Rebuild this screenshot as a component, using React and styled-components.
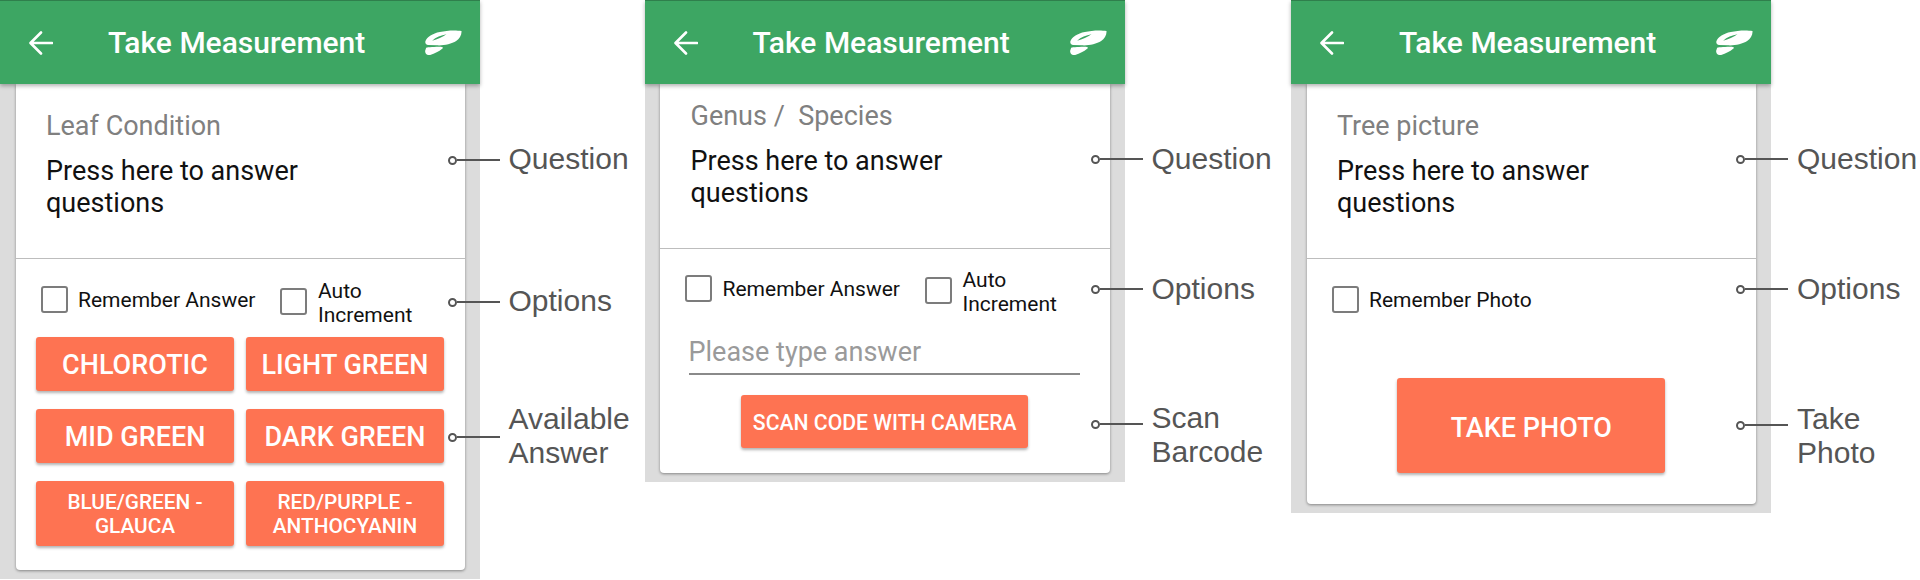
import React from "react";
import styled, { createGlobalStyle } from "styled-components";

const Global = createGlobalStyle`
  html, body { margin: 0; padding: 0; background: #fff; }
  * { box-sizing: border-box; }
  body { font-family: Roboto, "Liberation Sans", sans-serif; }
`;
const Page = styled.div`
  display: grid;
  grid-template-columns: 644.5px 646.5px 629px;
  align-items: start;
  width: 1920px;
`;
const Figure = styled.section`
  position: relative;
  width: 480px;
`;
const Phone = styled.div`
  width: 480px;
  background: #dcdcdc;
  padding-bottom: 8.5px;
`;
const Header = styled.header`
  position: relative;
  z-index: 1;
  height: 84px;
  display: flex;
  align-items: center;
  padding: 0 18px 0 29px;
  background: #3da663;
  border-top: 1px solid #2f7f4c;
  box-shadow: 0 2px 4px rgba(0, 0, 0, 0.3);
  color: #fff;
`;
const Title = styled.h1`
  margin: 0 auto 0 55px;
  font-size: 30px;
  font-weight: 500;
  line-height: 1;
`;
const Card = styled.main`
  margin: 0 15px 0 15.5px;
  background: #fff;
  border-radius: 0 0 4px 4px;
  box-shadow: 0 1px 3px rgba(0, 0, 0, 0.4);
`;
const QuestionBlock = styled.div`
  height: ${(p) => p.$height}px;
  padding: ${(p) => p.$top}px 100px 0 30.5px;
  border-bottom: 1.5px solid #bdbdbd;
`;
const QuestionTitle = styled.div`
  font-size: 27px;
  line-height: 32px;
  color: #808080;
  margin-bottom: 13px;
  white-space: pre;
`;
const QuestionText = styled.div`
  font-size: 27px;
  line-height: 32px;
  color: #111;
`;
const Body = styled.div`
  padding: ${(p) => p.$top}px 20.5px ${(p) => p.$bottom}px;
`;
const OptionRow = styled.div`
  display: flex;
  align-items: flex-start;
  gap: 25px;
  padding-left: 4.5px;
  height: 48px;
`;
const Option = styled.label`
  display: flex;
  align-items: center;
  gap: 10.5px;
  min-height: 42px;
  font-size: 21px;
  line-height: 24px;
  color: #111;
`;
const Box = styled.span`
  flex: none;
  width: 27px;
  height: 27px;
  border: 2.5px solid #7c7c7c;
  border-radius: 3px;
  margin-bottom: ${(p) => (p.$offset ? 4 : 1)}px;
`;
const AnswerGrid = styled.div`
  display: grid;
  grid-template-columns: 198px 198px;
  grid-auto-rows: auto;
  gap: 18px 12px;
  margin-top: 10px;
`;
const Button = styled.button`
  display: block;
  border: 0;
  border-radius: 3px;
  background: #fe7352;
  color: #fff;
  font-family: inherit;
  font-weight: 500;
  text-transform: uppercase;
  box-shadow: 0 2px 3px rgba(0, 0, 0, 0.3);
  font-size: ${(p) => p.$size}px;
  line-height: 24px;
  height: ${(p) => p.$h}px;
  width: ${(p) => (p.$w ? `${p.$w}px` : "100%")};
  padding: ${(p) => p.$drop || 1}px 8px 0;
`;
const AnswerInput = styled.input`
  display: block;
  width: 391px;
  height: 59px;
  margin-left: 8px;
  padding: 14px 0 0;
  border: 0;
  border-bottom: 2px solid #8a8a8a;
  outline: 0;
  background: transparent;
  font-family: inherit;
  font-size: 27px;
  &::placeholder { color: #9a9a9a; opacity: 1; }
`;
const Centered = styled.div`
  display: flex;
  justify-content: center;
  margin-top: ${(p) => p.$top}px;
`;
const Callout = styled.div`
  position: absolute;
  z-index: 2;
  left: ${(p) => p.$left}px;
  top: ${(p) => p.$top}px;
  transform: translateY(-50%);
  display: flex;
  align-items: center;
`;
const Dot = styled.span`
  width: 9px;
  height: 9px;
  border: 2px solid #555;
  border-radius: 50%;
  background: #fff;
  flex: none;
`;
const Lead = styled.span`
  width: 43px;
  height: 2px;
  background: #555;
  flex: none;
`;
const CalloutLabel = styled.span`
  margin: ${(p) => p.$drop || 0}px 0 0 9px;
  font-family: "Liberation Sans", Arial, sans-serif;
  font-size: 30px;
  line-height: 34px;
  color: #555;
  white-space: pre;
`;

const BackIcon = () => (
  <svg width="24" height="24" viewBox="0 0 24 24" fill="none" stroke="#fff" strokeWidth="2.6" strokeLinecap="round" strokeLinejoin="round">
    <path d="M23 12H2M12 1.500 1.500 12 12 22.500" />
  </svg>
);
const SpecIcon = () => (
  <svg width="37" height="25" viewBox="0 0 110 75" fill="#fff">
    <path fillRule="evenodd" d="M1 33C6 21 22 10 44 6 64 1 92 0 109 3 110 15 103 26 93 33 79 42 56 47 36 46L9 45C2 43-1 39 1 33ZM21 32C32 22 48 16 64 13 52 21 37 28 21 32Z" />
    <path d="M3 53C8 51 30 50 47 50 54 51 55 53 51 56 41 64 29 70 15 75 6 77-1 71 0 62Z" />
  </svg>
);

const AppHeader = () => (
  <Header>
    <BackIcon />
    <Title>Take Measurement</Title>
    <SpecIcon />
  </Header>
);

const Note = ({ left, top, drop, children }) => (
  <Callout $left={left} $top={top}>
    <Dot />
    <Lead />
    <CalloutLabel $drop={drop}>{children}</CalloutLabel>
  </Callout>
);

const RememberOptions = () => (
  <OptionRow>
    <Option><Box />Remember Answer</Option>
    <Option><Box $offset />Auto<br />Increment</Option>
  </OptionRow>
);

export default function App() {
  return (
    <>
      <Global />
      <Page>
        <Figure>
          <Phone>
            <AppHeader />
            <Card>
              <QuestionBlock $height={175} $top={26}>
                <QuestionTitle>Leaf Condition</QuestionTitle>
                <QuestionText>Press here to answer questions</QuestionText>
              </QuestionBlock>
              <Body $top={20} $bottom={24}>
                <RememberOptions />
                <AnswerGrid>
                  <Button $size={27} $h={54}>Chlorotic</Button>
                  <Button $size={27} $h={54}>Light Green</Button>
                  <Button $size={27} $h={54}>Mid Green</Button>
                  <Button $size={27} $h={54}>Dark Green</Button>
                  <Button $size={20.8} $h={65}>Blue/Green - Glauca</Button>
                  <Button $size={20.8} $h={65}>Red/Purple - Anthocyanin</Button>
                </AnswerGrid>
              </Body>
            </Card>
          </Phone>
          <Note left={447.5} top={160} drop={-2}>Question</Note>
          <Note left={447.5} top={302} drop={-2}>Options</Note>
          <Note left={447.5} top={437} drop={-2}>{"Available\nAnswer"}</Note>
        </Figure>

        <Figure>
          <Phone>
            <AppHeader />
            <Card>
              <QuestionBlock $height={165} $top={16}>
                <QuestionTitle>{"Genus /  Species"}</QuestionTitle>
                <QuestionText>Press here to answer questions</QuestionText>
              </QuestionBlock>
              <Body $top={19} $bottom={25}>
                <RememberOptions />
                <AnswerInput readOnly placeholder="Please type answer" />
                <Centered $top={20}>
                  <Button $size={21.2} $h={53} $drop={3} $w={287}>Scan code with camera</Button>
                </Centered>
              </Body>
            </Card>
          </Phone>
          <Note left={446} top={159}>Question</Note>
          <Note left={446} top={289}>Options</Note>
          <Note left={446} top={424} drop={22}>{"Scan\nBarcode"}</Note>
        </Figure>

        <Figure>
          <Phone>
            <AppHeader />
            <Card>
              <QuestionBlock $height={175} $top={26}>
                <QuestionTitle>Tree picture</QuestionTitle>
                <QuestionText>Press here to answer questions</QuestionText>
              </QuestionBlock>
              <Body $top={20} $bottom={31}>
                <OptionRow>
                  <Option><Box />Remember Photo</Option>
                </OptionRow>
                <Centered $top={51}>
                  <Button $size={27} $h={95} $drop={4} $w={268}>Take photo</Button>
                </Centered>
              </Body>
            </Card>
          </Phone>
          <Note left={445} top={159}>Question</Note>
          <Note left={445} top={289}>Options</Note>
          <Note left={445} top={425} drop={22}>{"Take\nPhoto"}</Note>
        </Figure>
      </Page>
    </>
  );
}
